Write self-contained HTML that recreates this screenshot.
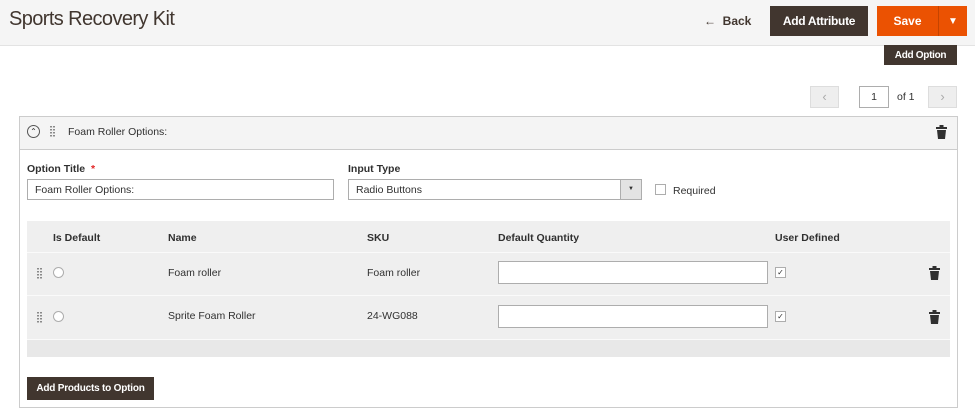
<!DOCTYPE html>
<html><head><style>
*{box-sizing:border-box;margin:0;padding:0}
body{width:975px;height:415px;background:#fff;font-family:"Liberation Sans",sans-serif;color:#303030;position:relative;overflow:hidden;font-size:10.5px}
.a{position:absolute}
.btn{position:absolute;color:#fff;font-weight:bold;display:flex;align-items:center;justify-content:center;white-space:nowrap}
.grip{position:absolute;width:5px;height:11px;background:repeating-linear-gradient(#8a8a8a 0 1.5px,transparent 1.5px 3px);}
.grip:before{content:"";position:absolute;left:0;top:0;width:5px;height:11px;background:repeating-linear-gradient(90deg,transparent 0 2px,#eee 2px 3px)}
.inp{position:absolute;background:#fff;border:1px solid #adadad}
.trash{position:absolute}
</style></head><body>
<div class="a" style="left:0;top:0;width:975px;height:46px;background:#f5f5f5;border-bottom:1px solid #e3e3e3"></div>
<div class="a" style="left:9px;top:8px;font-size:20px;letter-spacing:-0.6px;color:#41362f">Sports Recovery Kit</div>
<div class="a" style="left:704px;top:14px;font-size:12px;font-weight:bold;color:#41362f">&#8592;&nbsp; Back</div>
<div class="btn" style="left:770px;top:6px;width:98px;height:30px;background:#41362f;font-size:12px;letter-spacing:-0.3px">Add Attribute</div>
<div class="btn" style="left:877px;top:6px;width:61px;height:30px;background:#eb5202;font-size:12px">Save</div>
<div class="btn" style="left:938px;top:6px;width:29px;height:30px;background:#eb5202;border-left:1px solid #c54400;font-size:10px">&#9660;</div>
<div class="btn" style="left:884px;top:45px;width:73px;height:20px;background:#41362f;font-size:10px;letter-spacing:-0.3px">Add Option</div>
<div class="a" style="left:810px;top:86px;width:29px;height:22px;background:#eee;border:1px solid #ddd;color:#aaa;text-align:center;line-height:19px;font-size:13px">&#8249;</div>
<div class="a" style="left:859px;top:86px;width:30px;height:22px;border:1px solid #adadad;text-align:center;line-height:20px">1</div>
<div class="a" style="left:897px;top:91px">of 1</div>
<div class="a" style="left:928px;top:86px;width:29px;height:22px;background:#eee;border:1px solid #ddd;color:#aaa;text-align:center;line-height:19px;font-size:13px">&#8250;</div>
<div class="a" style="left:19px;top:116px;width:939px;height:292px;border:1px solid #ccc"></div>
<div class="a" style="left:19px;top:116px;width:939px;height:34px;background:#f4f4f4;border:1px solid #ccc"></div>
<div class="a" style="left:27px;top:125px;width:13px;height:13px;border:1px solid #555;border-radius:50%;font-size:8px;text-align:center;line-height:12px">&#8963;</div>
<div class="grip" style="left:50px;top:126px"></div>
<div class="a" style="left:68px;top:126px">Foam Roller Options:</div>
<svg class="trash" style="left:936px;top:125px" width="11" height="14" viewBox="0 0 11 14"><rect x="3.5" y="0" width="4" height="2" fill="#303030"/><rect x="0" y="2" width="11" height="2" fill="#303030"/><path d="M1 5h9l-1 9H2z" fill="#303030"/></svg>
<div class="a" style="left:27px;top:163px;font-weight:bold">Option Title <span style="color:#e22626">&nbsp;*</span></div>
<div class="inp" style="left:27px;top:179px;width:307px;height:21px;padding:4px 7px">Foam Roller Options:</div>
<div class="a" style="left:348px;top:163px;font-weight:bold">Input Type</div>
<div class="inp" style="left:348px;top:179px;width:294px;height:21px;padding:4px 7px">Radio Buttons</div>
<div class="a" style="left:620px;top:180px;width:21px;height:19px;background:#e3e3e3;border-left:1px solid #adadad;font-size:6px;text-align:center;line-height:19px">&#9660;</div>
<div class="a" style="left:655px;top:184px;width:11px;height:11px;border:1px solid #adadad;background:#fff"></div>
<div class="a" style="left:673px;top:185px">Required</div>
<div class="a" style="left:27px;top:221px;width:923px;height:136px;background:#efefef"></div>
<div class="a" style="left:27px;top:252px;width:923px;height:1px;background:#fafafa"></div>
<div class="a" style="left:27px;top:295px;width:923px;height:1px;background:#fafafa"></div>
<div class="a" style="left:27px;top:339px;width:923px;height:1px;background:#fafafa"></div>
<div class="a" style="left:27px;top:340px;width:923px;height:17px;background:#e8e8e8"></div>
<div class="a" style="left:53px;top:232px;font-weight:bold">Is Default</div>
<div class="a" style="left:168px;top:232px;font-weight:bold">Name</div>
<div class="a" style="left:367px;top:232px;font-weight:bold">SKU</div>
<div class="a" style="left:498px;top:232px;font-weight:bold">Default Quantity</div>
<div class="a" style="left:775px;top:232px;font-weight:bold">User Defined</div>

<div class="grip" style="left:37px;top:268px"></div>
<div class="a" style="left:53px;top:267px;width:11px;height:11px;border:1px solid #adadad;border-radius:50%;background:#fff"></div>
<div class="a" style="left:168px;top:267px">Foam roller</div>
<div class="a" style="left:367px;top:267px">Foam roller</div>
<div class="inp" style="left:498px;top:261px;width:270px;height:23px"></div>
<div class="a" style="left:775px;top:267px;width:11px;height:11px;border:1px solid #adadad;background:#fff;font-size:8px;line-height:9px;text-align:center">&#10003;</div>
<svg class="trash" style="left:929px;top:266px" width="11" height="14" viewBox="0 0 11 14"><rect x="3.5" y="0" width="4" height="2" fill="#303030"/><rect x="0" y="2" width="11" height="2" fill="#303030"/><path d="M1 5h9l-1 9H2z" fill="#303030"/></svg>

<div class="grip" style="left:37px;top:312px"></div>
<div class="a" style="left:53px;top:311px;width:11px;height:11px;border:1px solid #adadad;border-radius:50%;background:#fff"></div>
<div class="a" style="left:168px;top:310px">Sprite Foam Roller</div>
<div class="a" style="left:367px;top:310px">24-WG088</div>
<div class="inp" style="left:498px;top:305px;width:270px;height:23px"></div>
<div class="a" style="left:775px;top:311px;width:11px;height:11px;border:1px solid #adadad;background:#fff;font-size:8px;line-height:9px;text-align:center">&#10003;</div>
<svg class="trash" style="left:929px;top:310px" width="11" height="14" viewBox="0 0 11 14"><rect x="3.5" y="0" width="4" height="2" fill="#303030"/><rect x="0" y="2" width="11" height="2" fill="#303030"/><path d="M1 5h9l-1 9H2z" fill="#303030"/></svg>

<div class="btn" style="left:27px;top:377px;width:127px;height:23px;background:#41362f;font-size:10px;letter-spacing:-0.2px">Add Products to Option</div>
</body></html>
